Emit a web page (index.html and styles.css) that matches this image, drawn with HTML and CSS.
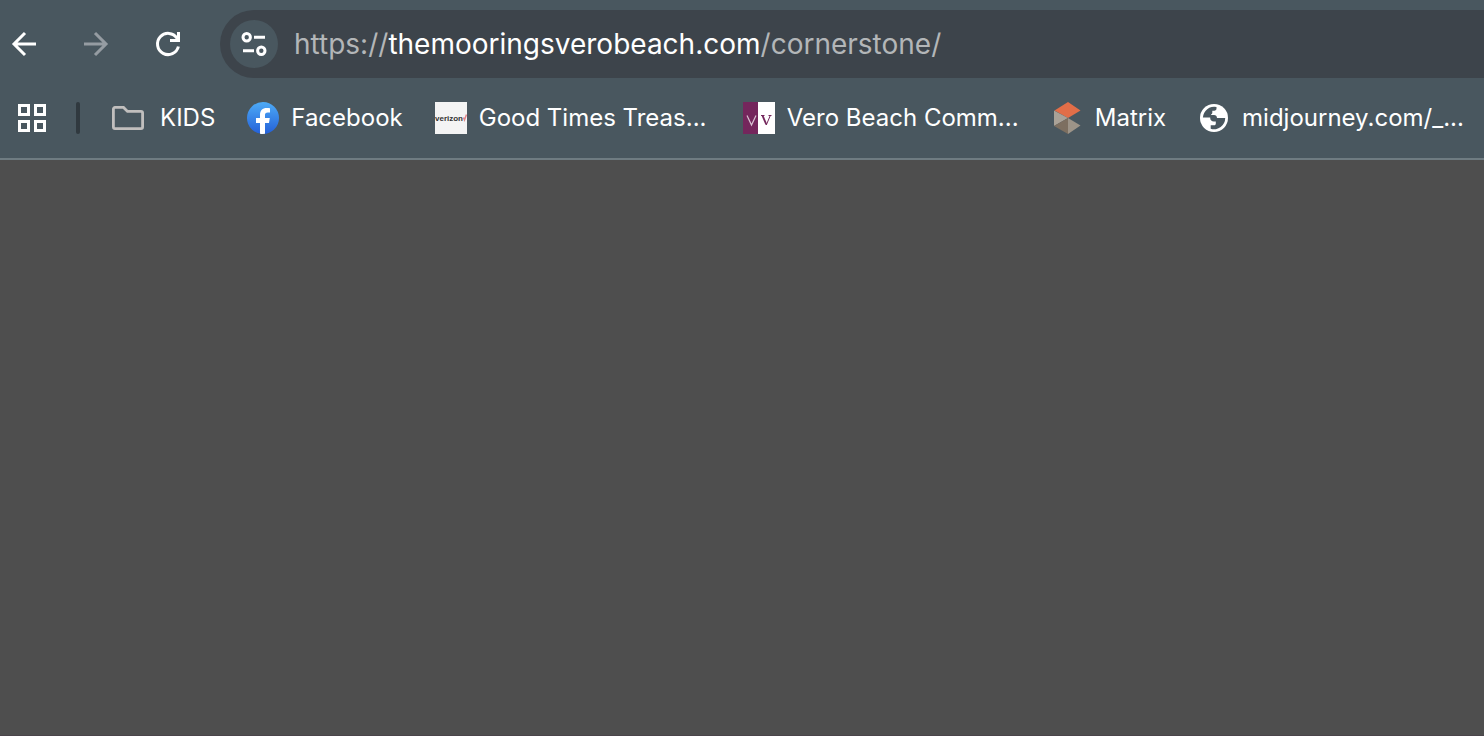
FILE: index.html
```html
<!DOCTYPE html>
<html lang="en">
<head>
	<meta charset="UTF-8">
	<meta name="viewport" content="width=device-width, initial-scale=1.0">
	<title>themooringsverobeach.com</title>
	<link rel="stylesheet" href="styles.css">
</head>
<body>
	<header class="browser">
		<div class="toolbar">
			<button type="button" class="nav-btn" aria-label="Back">
				<svg width="48" height="48" viewBox="0 0 48 48"><path d="M36 24H14M25 13L14 24l11 11"/></svg>
			</button>
			<button type="button" class="nav-btn nav-off" aria-label="Forward" disabled>
				<svg width="48" height="48" viewBox="0 0 48 48"><path d="M12 24h22M23 13l11 11-11 11"/></svg>
			</button>
			<button type="button" class="nav-btn" aria-label="Reload">
				<svg width="48" height="48" viewBox="0 0 48 48"><path d="M34.4 26.5A10.6 10.6 0 1 1 33 18.2l1.500 2.300M26 20.500h8.500V12"/></svg>
			</button>
			<div class="omnibox">
				<button type="button" class="site-info" aria-label="View site information">
					<svg width="48" height="48" viewBox="0 0 48 48"><circle cx="16.700" cy="17.300" r="3.700"/><path d="M24 17.300h11M13 30.700h11"/><circle cx="31.300" cy="30.700" r="3.700"/></svg>
				</button>
				<div class="url" role="textbox" aria-label="Address and search bar" contenteditable="true" spellcheck="false">https://<span class="host">themooringsverobeach.com</span>/cornerstone/</div>
			</div>
		</div>
		<nav class="bookmarks" aria-label="Bookmarks">
			<button type="button" class="apps" aria-label="Apps">
				<svg width="32" height="32" viewBox="0 0 32 32"><path d="M3.500 3.500h9v9h-9zM19.500 3.500h9v9h-9zM3.500 19.500h9v9h-9zM19.500 19.500h9v9h-9z"/></svg>
			</button>
			<span class="divider"></span>
			<button type="button" class="bookmark folder">
				<svg width="32" height="32" viewBox="0 0 32 32"><path d="M3 5.400h8.500l4 4H29a1.600 1.600 0 0 1 1.600 1.600v14a1.600 1.600 0 0 1-1.600 1.600H3A1.600 1.600 0 0 1 1.400 25V7A1.600 1.600 0 0 1 3 5.400z" fill="none" stroke="#c1bfbe" stroke-width="2.800"/></svg>
				<span>KIDS</span>
			</button>
			<a class="bookmark" href="#">
				<svg width="32" height="32" viewBox="0 0 32 32">
					<defs><linearGradient id="fb" x1="0" y1="0" x2="0" y2="1"><stop offset="0" stop-color="#4dabf7"/><stop offset="1" stop-color="#2460d8"/></linearGradient></defs>
					<circle cx="16" cy="16" r="16" fill="url(#fb)"/>
					<path d="M13 31.700V21H9v-5h4v-3c0-4.800 2.500-7 6.700-7 1.200 0 2.300.1 3.300.3v4.200h-2.200c-2.100 0-2.800 1-2.800 2.600V16h4.800L22 21h-4v10.800a16 16 0 0 1-5-.1z" fill="#fff"/>
				</svg>
				<span>Facebook</span>
			</a>
			<a class="bookmark" href="#">
				<svg width="32" height="32" viewBox="0 0 32 32">
					<path d="M0 0h32v32H0z" fill="#f4f4f4"/>
					<text class="verizon" x="0" y="19">verizon</text>
					<path d="M28.500 15.500l1 2.500 2-5.500" fill="none" stroke="#e2868b" stroke-width="1.500"/>
				</svg>
				<span class="cut">Good Times Treas...</span>
			</a>
			<a class="bookmark" href="#">
				<svg width="32" height="32" viewBox="0 0 32 32">
					<path d="M0 0h15v32H0z" fill="#74265c"/>
					<path d="M15 0h17v32H15z" fill="#fff"/>
					<path d="M4 13.500L8.500 23 13 13.500" fill="none" stroke="#d9c3d3" stroke-width="1.200"/>
					<path d="M19.500 13.500l3.800 9" fill="none" stroke="#74265c" stroke-width="1.900"/>
					<path d="M23.300 23l4-9.500M18 13.500h3.500M25.500 13.500h3" fill="none" stroke="#74265c"/>
				</svg>
				<span class="cut">Vero Beach Comm...</span>
			</a>
			<a class="bookmark" href="#">
				<svg width="32" height="32" viewBox="0 0 32 32">
					<path d="M17 0l12.500 8.500L17 16 3.500 8.500z" fill="#e26e48"/>
					<path d="M3 8.500L17 16 3 24z" fill="#aaa297"/>
					<path d="M17 16v16L3 24z" fill="#7d6f60"/>
					<path d="M17 16l12.500 7.500L17 32z" fill="#9d9488"/>
				</svg>
				<span>Matrix</span>
			</a>
			<a class="bookmark" href="#">
				<svg width="32" height="32" viewBox="0 0 32 32">
					<circle cx="16" cy="16" r="14" fill="#fff"/>
					<path d="M4.900 15.600A11.300 11.300 0 0 1 18.500 5v1.500c0 1.400-.9 2.200-2.200 2.200h-2v2c0 .9-.5 1.500-1.300 1.700V13h3c1.800 0 3 1.200 3 3h8.200A11.200 11.200 0 0 1 12.700 26.800v-3.600h3.500c1 0 1.600-.6 1.600-1.500v-2.200h-2c-2 0-3.600-1.500-3.600-3.600v-.3z" fill="#49575f"/>
				</svg>
				<span class="cut">midjourney.com/_...</span>
			</a>
		</nav>
	</header>
	<main class="page"></main>
</body>
</html>
```

FILE: styles.css
```css
* {
	box-sizing: border-box;
}
body {
	margin: 0;
	min-height: 100vh;
	display: flex;
	flex-direction: column;
	overflow-x: hidden;
	background: #4e4e4e;
	color: #fff;
	font-family: Inter, "Liberation Sans", sans-serif;
}
button {
	padding: 0;
	border: 0;
	background: none;
	color: inherit;
	font: inherit;
}
a {
	color: inherit;
	text-decoration: none;
}
svg {
	display: block;
	flex: none;
}
.browser {
	background: #49575f;
	border-bottom: 2px solid #6f7c82;
}

/* toolbar */
.toolbar {
	display: flex;
	align-items: center;
	gap: 24px;
	padding-top: 10px;
}
.nav-btn svg,
.site-info svg {
	fill: none;
	stroke: #fff;
	stroke-width: 3;
}
.nav-off svg {
	stroke: #959ca2;
}
.omnibox {
	flex: 1;
	display: flex;
	align-items: center;
	gap: 16px;
	height: 68px;
	margin-left: 4px;
	padding-left: 10px;
	border-radius: 34px 0 0 34px;
	background: #3d444b;
}
.site-info {
	border-radius: 50%;
	background: #49575f;
}
.url {
	flex: 1;
	font-size: 28px;
	line-height: 36px;
	white-space: nowrap;
	color: #b3b6b8;
	outline: none;
}
.host {
	color: #fff;
}

/* bookmarks bar */
.bookmarks {
	display: flex;
	align-items: center;
	gap: 32px;
	height: 80px;
	padding-left: 16px;
	font-size: 24px;
	line-height: 32px;
	white-space: nowrap;
}
.apps path {
	fill: none;
	stroke: #fff;
	stroke-width: 3;
}
.divider {
	width: 4px;
	height: 32px;
	margin-left: -4px;
	border-radius: 2px;
	background: #30393f;
}
.bookmark {
	flex: none;
	display: flex;
	align-items: center;
	gap: 12px;
}
.folder {
	gap: 16px;
}
.cut {
	width: 232px;
}
.verizon {
	font: bold 8px "Liberation Sans", sans-serif;
	fill: #333;
}

.page {
	flex: 1;
	border-bottom: 1px solid #4a444a;
}
```
